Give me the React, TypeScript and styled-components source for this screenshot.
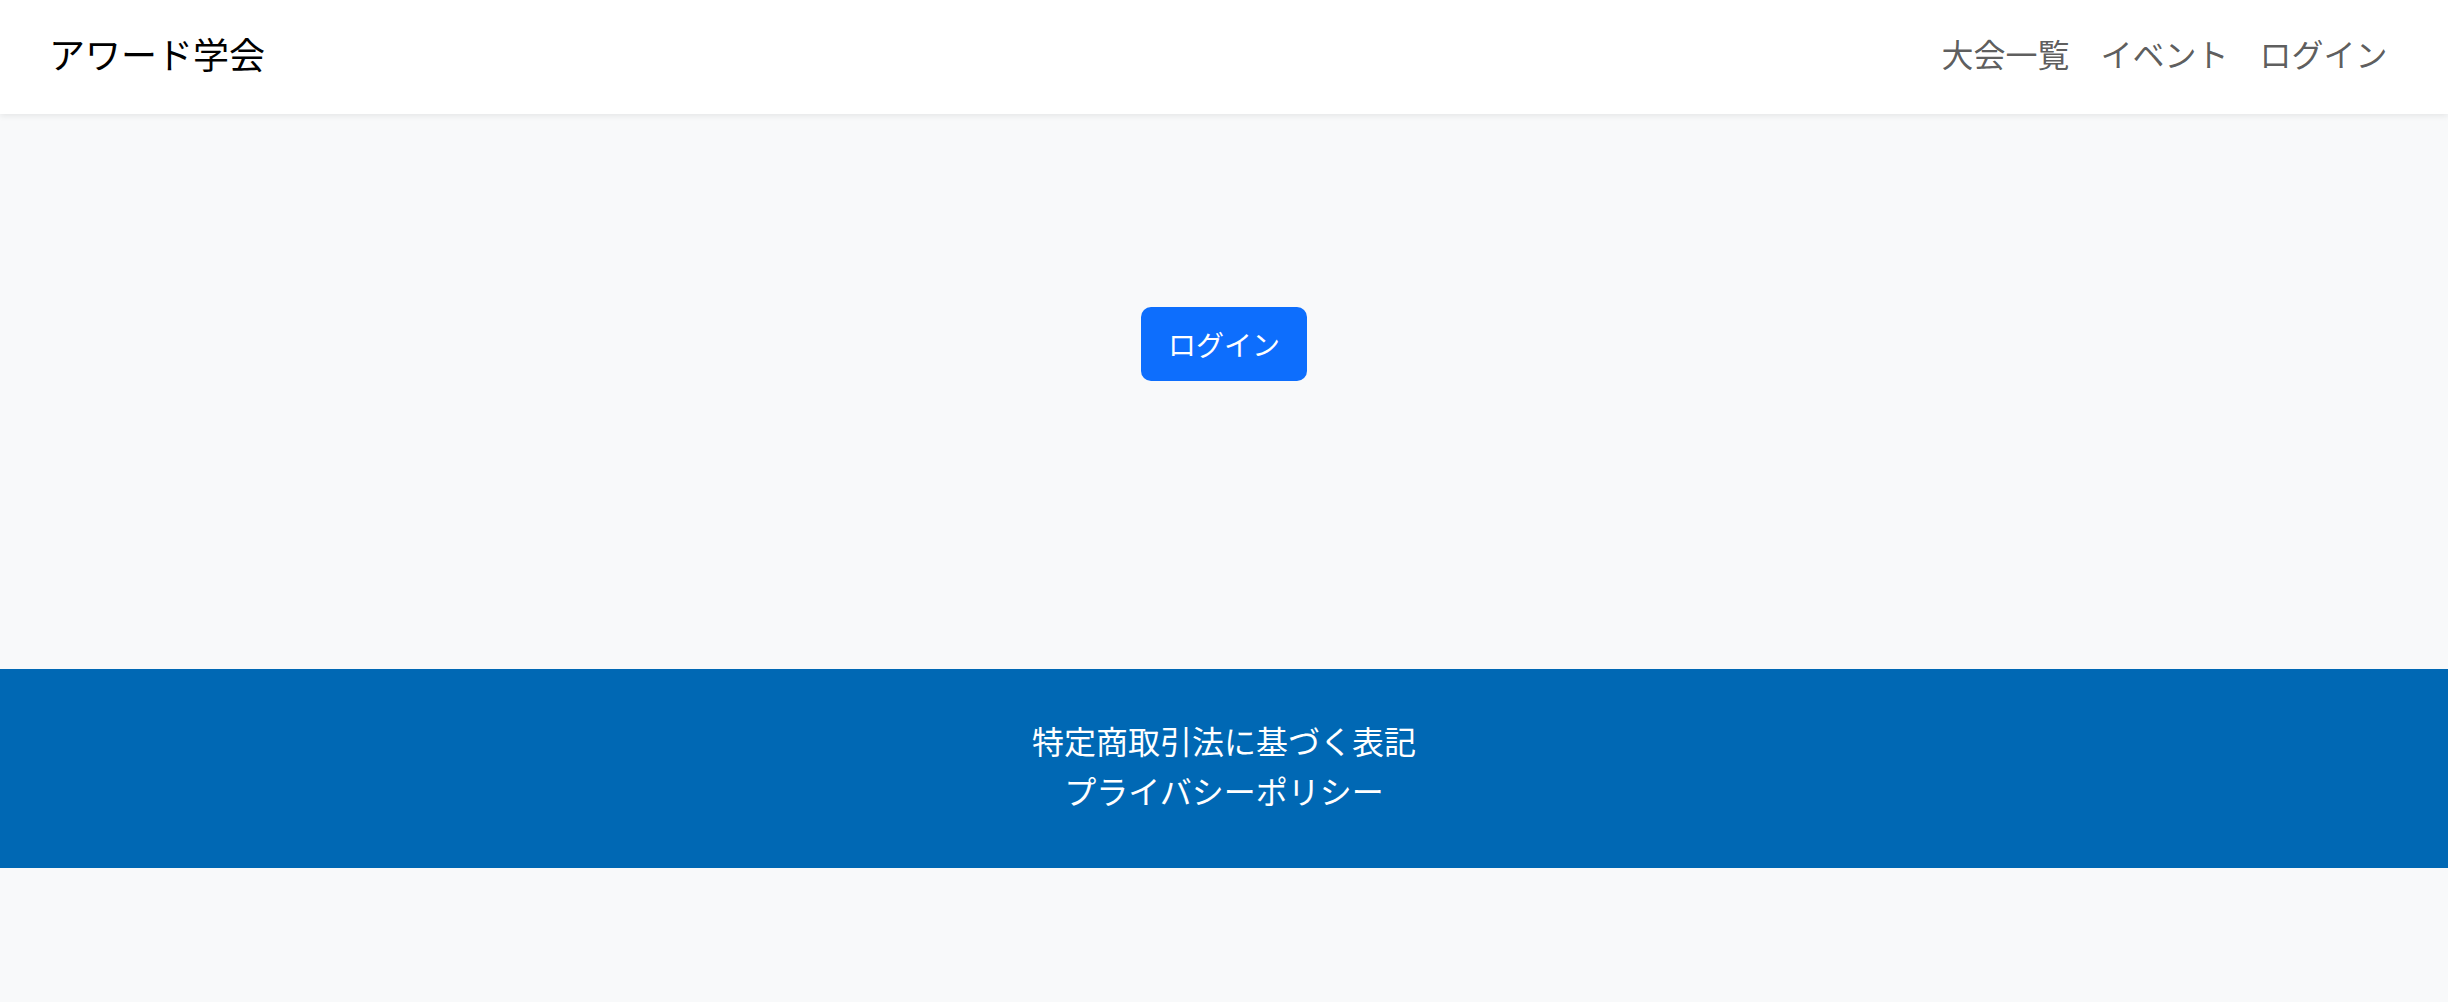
import React from "react";
import styled, { createGlobalStyle } from "styled-components";

const Global = createGlobalStyle`
  html, body { margin: 0; padding: 0; }
  body {
    background: #f8f9fa;
    font-family: "Noto Sans CJK JP", "Noto Sans", sans-serif;
    color: #212529;
  }
  a { text-decoration: none; }
`;

const Page = styled.div`
  display: flex;
  flex-direction: column;
  min-height: 1002px;
  background: #f8f9fa;
`;

const Header = styled.header`
  height: 114px;
  box-sizing: border-box;
  background: #ffffff;
  box-shadow: 0 2px 6px rgba(0, 0, 0, 0.08);
  display: flex;
  align-items: center;
  justify-content: space-between;
  padding: 0 45px 8px 49px;
  position: relative;
  z-index: 1;
`;

const Brand = styled.a`
  font-size: 36px;
  color: #000;
  line-height: 1;
`;

const Nav = styled.nav`
  display: flex;
  align-items: center;
`;

const NavLink = styled.a`
  font-size: 32px;
  line-height: 1;
  color: rgba(0, 0, 0, 0.65);
  padding: 0 15.5px;
`;

const Main = styled.main`
  height: 555px;
  display: flex;
  justify-content: center;
  align-items: flex-start;
  padding-top: 193px;
  box-sizing: border-box;
`;

const LoginButton = styled.button`
  height: 74px;
  padding: 0 27px;
  background: #0d6efd;
  color: #fff;
  border: none;
  border-radius: 10px;
  font-family: "Noto Sans CJK JP", "Noto Sans", sans-serif;
  font-size: 28px;
  line-height: 1;
  cursor: pointer;
`;

const Footer = styled.footer`
  height: 199px;
  box-sizing: border-box;
  padding-bottom: 8px;
  background: #0068b4;
  display: flex;
  flex-direction: column;
  align-items: center;
  justify-content: center;
`;

const FooterLink = styled.a`
  color: #fff;
  font-size: 32px;
  line-height: 50px;
`;

export default function App() {
  return (
    <Page>
      <Global />
      <Header>
        <Brand href="#">アワード学会</Brand>
        <Nav>
          <NavLink href="#">大会一覧</NavLink>
          <NavLink href="#">イベント</NavLink>
          <NavLink href="#">ログイン</NavLink>
        </Nav>
      </Header>
      <Main>
        <LoginButton>ログイン</LoginButton>
      </Main>
      <Footer>
        <FooterLink href="#">特定商取引法に基づく表記</FooterLink>
        <FooterLink href="#">プライバシーポリシー</FooterLink>
      </Footer>
    </Page>
  );
}
